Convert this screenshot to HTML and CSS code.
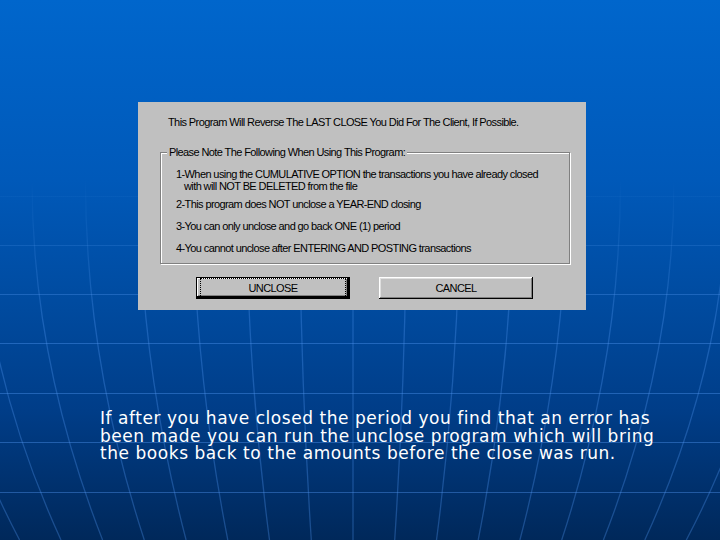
FILE: index.html
```html
<!DOCTYPE html>
<html lang="en">
<head>
    <meta charset="UTF-8">
    <meta name="viewport" content="width=device-width, initial-scale=1.0">
    <title>Unclose Period</title>
    <link rel="stylesheet" href="styles.css">
</head>
<body>
    <!-- globe grid behind the slide -->
    <svg class="backdrop" width="720" height="540" viewBox="0 0 720 540">
        <defs>
            <linearGradient id="fade" gradientUnits="userSpaceOnUse" x1="0" y1="175" x2="0" y2="320">
                <stop offset="0" stop-color="#5aa0f0" stop-opacity="0"/>
                <stop offset="1" stop-color="#4f94ef" stop-opacity="0.42"/>
            </linearGradient>
        </defs>
        <g stroke="url(#fade)" fill="none">
            <g stroke-width="1">
                <path d="M0 196.5H720"/>
                <path d="M0 245.5H720"/>
                <path d="M0 294.5H720"/>
                <path d="M0 343.5H720"/>
                <path d="M0 393.5H720"/>
                <path d="M0 442.5H720"/>
                <path d="M0 492.5H720"/>
            </g>
            <g stroke-width="1.3" opacity="0.8">
                <path d="M-75 180Q-75 360 19.6 540"/>
                <path d="M-21.5 180Q-21.5 360 61 540"/>
                <path d="M32 180Q32 360 102.6 540"/>
                <path d="M85.5 180Q85.5 360 144.3 540"/>
                <path d="M139 180Q139 360 186.1 540"/>
                <path d="M192.5 180Q192.5 360 227.8 540"/>
                <path d="M246 180Q246 360 269.5 540"/>
                <path d="M299.5 180Q299.5 360 311.3 540"/>
                <path d="M353 180V540"/>
                <path d="M406.5 180Q406.5 360 394.7 540"/>
                <path d="M460 180Q460 360 436.5 540"/>
                <path d="M513.5 180Q513.5 360 478.2 540"/>
                <path d="M567 180Q567 360 519.9 540"/>
                <path d="M620.5 180Q620.5 360 561.7 540"/>
                <path d="M674 180Q674 360 603.4 540"/>
                <path d="M727.5 180Q727.5 360 644.8 540"/>
                <path d="M781 180Q781 360 686.3 540"/>
            </g>
        </g>
    </svg>

    <div class="slide">
        <div class="dialog">
            <p class="dlg-title">This Program Will Reverse The LAST CLOSE You Did For The Client, If Possible.</p>

            <fieldset class="notes">
                <legend>Please Note The Following When Using This Program:</legend>
                <ol class="note-list">
                    <li>1-When using the CUMULATIVE OPTION the transactions you have already closed
                        <span class="cont">with will NOT BE DELETED from the file</span></li>
                    <li>2-This program does NOT unclose a YEAR-END closing</li>
                    <li>3-You can only unclose and go back ONE (1) period</li>
                    <li>4-You cannot unclose after ENTERING AND POSTING transactions</li>
                </ol>
            </fieldset>

            <div class="buttons">
                <button class="btn btn-default"><span class="focus">UNCLOSE</span></button>
                <button class="btn">CANCEL</button>
            </div>
        </div>

        <p class="caption">If after you have closed the period you find that an error has<br>been made you can run the unclose program which will bring<br>the books back to the amounts before the close was run.</p>
    </div>
</body>
</html>
```

FILE: styles.css
```css
html,
body {
    margin: 0;
}
body {
    position: relative;
    width: 720px;
    height: 540px;
    overflow: hidden;
    background: linear-gradient(#0066cc 0, #0059b9 180px, #004a9e 310px, #003d88 410px, #00285a 540px);
}
.backdrop {
    position: absolute;
    left: 0;
    top: 0;
}
.slide {
    position: relative;
    padding-top: 102px;
}

/* dialog window */
.dialog {
    margin-left: 138px;
    width: 448px;
    height: 208px;
    box-sizing: border-box;
    padding: 14px 16px 0 22px;
    background-color: #c0c0c0;
    color: #000;
    font-family: "Liberation Sans", Arial, sans-serif;
    font-size: 11px;
    line-height: 13px;
    letter-spacing: -0.6px;
}
.dlg-title {
    margin: 0 0 17px 8px;
}
.notes {
    margin: 0;
    padding: 0;
    border: 1px solid #808080;
    box-shadow: inset 1px 1px 0 #fff, 1px 1px 0 #fff;
}
.notes legend {
    margin-left: 6px;
    padding: 0 2px;
    background-color: #c0c0c0;
}
.note-list {
    list-style: none;
    margin: 0;
    padding: 9px 0 9px 15px;
    line-height: 12px;
}
.note-list li + li {
    margin-top: 10px;
}
.note-list li:nth-child(2) {
    margin-top: 6px;
}
.cont {
    display: block;
    padding-left: 8px;
}

/* buttons */
.buttons {
    display: flex;
    gap: 29px;
    margin: 13px 0 0 36px;
}
.btn {
    display: flex;
    align-items: center;
    justify-content: center;
    width: 154px;
    height: 22px;
    padding: 0;
    border: none;
    background-color: #c0c0c0;
    color: #000;
    font: inherit;
    letter-spacing: inherit;
    box-shadow: inset -1px -1px 0 #000, inset 1px 1px 0 #fff, inset -2px -2px 0 #808080, inset 2px 2px 0 #dfdfdf;
}
.btn-default {
    border: 1px solid #000;
    box-shadow: inset -2px -2px 0 #000, inset 1px 1px 0 #fff, inset -3px -3px 0 #808080;
}
.focus {
    display: flex;
    align-items: center;
    justify-content: center;
    width: 100%;
    height: 100%;
    margin: 3px;
    border: 1px dotted #000;
    box-sizing: border-box;
}

/* slide text */
.caption {
    margin: 100px 0 0 100px;
    color: #fff;
    font-family: "DejaVu Sans", Verdana, sans-serif;
    font-size: 17px;
    line-height: 17.5px;
    letter-spacing: 0.55px;
}
```
